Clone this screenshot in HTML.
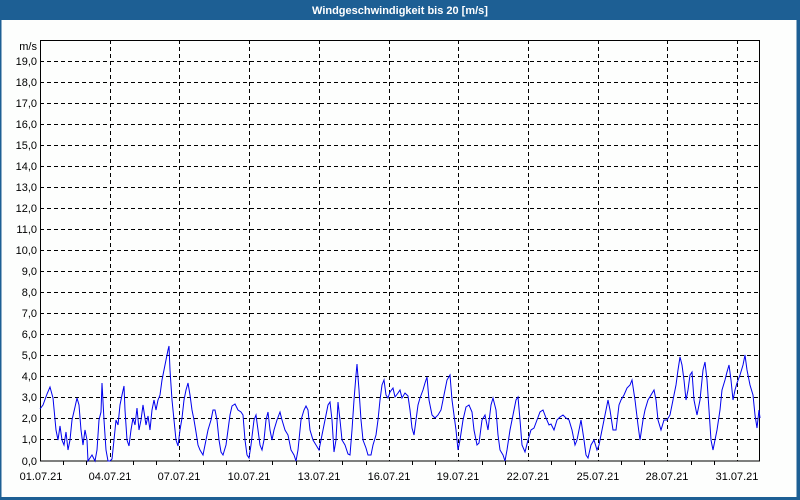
<!DOCTYPE html>
<html><head><style>
html,body{margin:0;padding:0;width:800px;height:500px;overflow:hidden;background:#fdfefd;}
svg{display:block;font-family:"Liberation Sans","DejaVu Sans",sans-serif;}
</style></head><body>
<svg width="800" height="500" viewBox="0 0 800 500">
<rect x="0" y="0" width="800" height="500" fill="#1d5f94"/>
<rect x="1.5" y="20" width="795" height="477" fill="#fdfefd"/>
<text x="400" y="14" fill="#fff" font-size="11" font-weight="bold" text-anchor="middle">Windgeschwindigkeit bis 20 [m/s]</text>
<g stroke="#000" stroke-width="1" stroke-dasharray="4,3" shape-rendering="crispEdges">
<line x1="40" x2="760" y1="61.5" y2="61.5"/><line x1="40" x2="760" y1="82.5" y2="82.5"/><line x1="40" x2="760" y1="103.5" y2="103.5"/><line x1="40" x2="760" y1="124.5" y2="124.5"/><line x1="40" x2="760" y1="145.5" y2="145.5"/><line x1="40" x2="760" y1="166.5" y2="166.5"/><line x1="40" x2="760" y1="187.5" y2="187.5"/><line x1="40" x2="760" y1="208.5" y2="208.5"/><line x1="40" x2="760" y1="229.5" y2="229.5"/><line x1="40" x2="760" y1="250.5" y2="250.5"/><line x1="40" x2="760" y1="271.5" y2="271.5"/><line x1="40" x2="760" y1="292.5" y2="292.5"/><line x1="40" x2="760" y1="313.5" y2="313.5"/><line x1="40" x2="760" y1="334.5" y2="334.5"/><line x1="40" x2="760" y1="355.5" y2="355.5"/><line x1="40" x2="760" y1="376.5" y2="376.5"/><line x1="40" x2="760" y1="397.5" y2="397.5"/><line x1="40" x2="760" y1="418.5" y2="418.5"/><line x1="40" x2="760" y1="439.5" y2="439.5"/>
<line y1="40" y2="461" x1="110.5" x2="110.5"/><line y1="40" y2="461" x1="179.5" x2="179.5"/><line y1="40" y2="461" x1="249.5" x2="249.5"/><line y1="40" y2="461" x1="319.5" x2="319.5"/><line y1="40" y2="461" x1="389.5" x2="389.5"/><line y1="40" y2="461" x1="458.5" x2="458.5"/><line y1="40" y2="461" x1="528.5" x2="528.5"/><line y1="40" y2="461" x1="598.5" x2="598.5"/><line y1="40" y2="461" x1="667.5" x2="667.5"/><line y1="40" y2="461" x1="737.5" x2="737.5"/>
</g>
<rect x="40.5" y="40.5" width="719" height="420.5" fill="none" stroke="#000" stroke-width="1"/>
<g stroke="#000" shape-rendering="crispEdges">
<line x1="63.5" x2="63.5" y1="461" y2="465"/><line x1="86.5" x2="86.5" y1="461" y2="465"/><line x1="133.5" x2="133.5" y1="461" y2="465"/><line x1="156.5" x2="156.5" y1="461" y2="465"/><line x1="203.5" x2="203.5" y1="461" y2="465"/><line x1="226.5" x2="226.5" y1="461" y2="465"/><line x1="272.5" x2="272.5" y1="461" y2="465"/><line x1="296.5" x2="296.5" y1="461" y2="465"/><line x1="342.5" x2="342.5" y1="461" y2="465"/><line x1="366.5" x2="366.5" y1="461" y2="465"/><line x1="412.5" x2="412.5" y1="461" y2="465"/><line x1="435.5" x2="435.5" y1="461" y2="465"/><line x1="482.5" x2="482.5" y1="461" y2="465"/><line x1="505.5" x2="505.5" y1="461" y2="465"/><line x1="551.5" x2="551.5" y1="461" y2="465"/><line x1="575.5" x2="575.5" y1="461" y2="465"/><line x1="621.5" x2="621.5" y1="461" y2="465"/><line x1="644.5" x2="644.5" y1="461" y2="465"/><line x1="691.5" x2="691.5" y1="461" y2="465"/><line x1="714.5" x2="714.5" y1="461" y2="465"/>
</g>
<g font-size="11" fill="#000" text-anchor="end">
<text x="37" y="50">m/s</text>
<text x="37" y="65">19,0</text><text x="37" y="86">18,0</text><text x="37" y="107">17,0</text><text x="37" y="128">16,0</text><text x="37" y="149">15,0</text><text x="37" y="170">14,0</text><text x="37" y="191">13,0</text><text x="37" y="212">12,0</text><text x="37" y="233">11,0</text><text x="37" y="254">10,0</text><text x="37" y="275">9,0</text><text x="37" y="296">8,0</text><text x="37" y="317">7,0</text><text x="37" y="338">6,0</text><text x="37" y="359">5,0</text><text x="37" y="380">4,0</text><text x="37" y="401">3,0</text><text x="37" y="422">2,0</text><text x="37" y="443">1,0</text><text x="37" y="465">0,0</text>
</g>
<g font-size="11" fill="#000" text-anchor="middle">
<text x="41" y="480">01.07.21</text><text x="110" y="480">04.07.21</text><text x="179" y="480">07.07.21</text><text x="249" y="480">10.07.21</text><text x="319" y="480">13.07.21</text><text x="389" y="480">16.07.21</text><text x="458" y="480">19.07.21</text><text x="528" y="480">22.07.21</text><text x="598" y="480">25.07.21</text><text x="667" y="480">28.07.21</text><text x="737" y="480">31.07.21</text>
</g>
<polyline fill="none" stroke="#0000ee" stroke-width="1" points="
40,409 43,405 47,394 50,387 53,398 56,430 58,440 60,426 62,440 64,445 66,432 68,450 70,440 72,420 75,407 77,398 79,405 81,430 83,445 85,430 87,440 88,461 92,455 95,461 97,450 99,420 101,412 102,383 104,420 106,450 108,461 110,461 112,459 114,440 116,420 118,425 120,405 122,395 124,386 125,410 127,440 129,446 131,430 133,418 135,425 137,408 139,430 141,420 143,405 146,425 148,416 150,430 152,410 154,400 156,410 158,400 160,395 162,380 164,370 166,360 168,350 169,346 170,370 172,400 174,420 176,440 178,446 180,430 182,418 184,400 186,390 188,383 190,395 192,410 194,420 196,432 198,445 200,450 203,455 205,445 208,430 211,420 213,410 215,410 217,420 219,440 221,452 223,455 226,445 228,430 230,415 232,406 235,404 238,410 241,412 243,415 245,440 247,455 249,458 251,445 254,420 256,415 258,430 260,445 262,450 264,440 266,420 268,412 270,430 272,440 274,430 277,420 280,412 282,420 285,430 288,435 291,450 294,455 296,461 298,450 301,420 304,410 306,406 308,410 310,430 313,440 316,445 319,450 322,435 325,420 328,405 330,402 332,420 334,452 336,440 338,402 340,420 342,440 345,445 348,454 350,455 352,430 354,400 356,375 357,364 359,390 361,420 363,440 366,448 368,455 371,455 373,445 376,435 378,420 380,400 382,385 384,380 386,395 388,398 390,392 393,388 395,397 398,393 400,390 402,398 405,393 408,396 410,410 412,428 414,435 416,420 418,405 420,398 423,390 425,383 427,377 429,400 432,415 435,418 438,415 441,410 444,395 447,380 450,375 452,400 454,415 456,430 458,450 460,440 463,420 466,407 469,405 472,412 474,430 477,445 479,443 482,420 485,415 488,430 491,405 493,398 496,410 498,435 500,450 503,455 505,461 507,450 510,430 513,415 516,400 518,397 520,420 522,445 525,452 528,440 531,430 534,428 537,420 540,412 543,410 546,418 549,425 551,424 554,430 557,420 560,417 563,415 566,418 569,420 572,430 575,445 577,440 579,430 581,420 584,440 586,455 588,458 591,445 594,440 597,450 599,445 601,435 604,420 606,410 608,400 610,410 613,430 616,430 619,405 621,400 624,395 627,388 630,385 632,380 635,400 638,425 640,440 643,420 645,410 648,400 651,395 654,390 656,400 658,420 661,430 664,420 667,420 670,415 673,400 676,385 678,370 680,357 682,365 684,380 686,400 688,390 690,375 692,372 694,400 697,415 700,400 703,370 705,362 707,380 709,410 711,440 713,450 715,440 717,430 720,410 722,390 725,380 727,372 729,365 731,380 733,400 735,390 737,383 740,375 743,365 745,355 747,370 750,385 753,395 755,415 757,428 759,410 760,418"/>
</svg>
</body></html>
